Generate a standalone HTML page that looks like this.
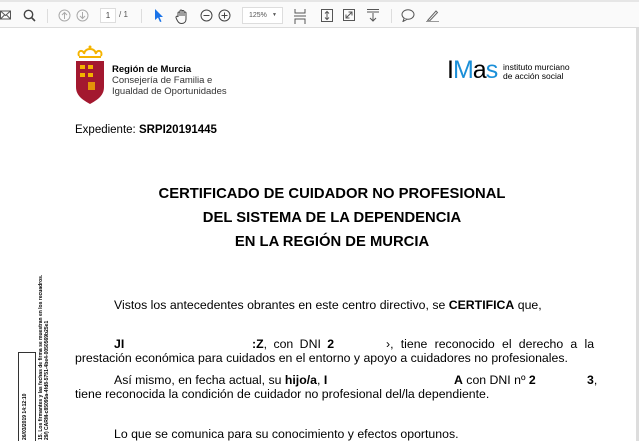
<!DOCTYPE html>
<html><head><meta charset="utf-8"><style>
*{margin:0;padding:0;box-sizing:border-box}
body{width:639px;height:441px;overflow:hidden;background:#fff;font-family:"Liberation Sans",sans-serif;position:relative;color:#000}
.tb{position:absolute;left:0;top:0;width:639px;height:28px;background:#fafafa;border-top:2px solid #e6e6e6;border-bottom:1px solid #dcdcdc}
.a{position:absolute;white-space:nowrap}
.ic{position:absolute;top:7px}
.sep{position:absolute;top:7px;width:1px;height:14px;background:#ddd}
.t{font-size:12.3px}
</style></head><body>
<div class="tb">
<svg class="ic" style="left:0" width="12" height="12" viewBox="0 0 12 12"><rect x="0.5" y="2" width="10" height="8" fill="none" stroke="#555"/><path d="M0.5 2L5.5 6.5 10.5 2M0.5 10l4-4M10.5 10l-4-4" fill="none" stroke="#555"/></svg>
<svg class="ic" style="left:23px" width="13" height="13" viewBox="0 0 13 13"><circle cx="5.5" cy="5.5" r="4.2" fill="none" stroke="#444" stroke-width="1.4"/><path d="M8.5 8.5L12 12" stroke="#444" stroke-width="1.6"/></svg>
<div class="sep" style="left:47px"></div>
<svg class="ic" style="left:58px" width="13" height="13" viewBox="0 0 13 13"><circle cx="6.5" cy="6.5" r="5.5" fill="none" stroke="#aaa"/><path d="M6.5 10V3.5M4 6l2.5-2.5L9 6" fill="none" stroke="#aaa"/></svg>
<svg class="ic" style="left:76px" width="13" height="13" viewBox="0 0 13 13"><circle cx="6.5" cy="6.5" r="5.5" fill="none" stroke="#aaa"/><path d="M6.5 3v6.5M4 7l2.5 2.5L9 7" fill="none" stroke="#aaa"/></svg>
<div class="a" style="left:100px;top:6px;width:16px;height:15px;border:1px solid #ddd;background:#fff;font-size:8px;text-align:center;line-height:13px;color:#444">1</div>
<div class="a" style="left:119px;top:8px;font-size:8px;color:#555">/ 1</div>
<div class="sep" style="left:141px"></div>
<svg class="ic" style="left:154px" width="10" height="14" viewBox="0 0 10 14"><path d="M1 0L9 8H5.5L7.5 12.5 6 13 4 8.5 1 11Z" fill="#1a73e8"/></svg>
<svg class="ic" style="left:175px" width="14" height="15" viewBox="0 0 14 15"><path d="M3 8V4a1 1 0 012 0V7V2a1 1 0 012 0v5V2.5a1 1 0 012 0V7V4a1 1 0 012 0v6c0 3-2 4.5-4.5 4.5S3 13 1.5 10L1 8.5a1 1 0 012-.5" fill="none" stroke="#444"/></svg>
<svg class="ic" style="left:200px" width="13" height="13" viewBox="0 0 13 13"><circle cx="6.5" cy="6.5" r="5.5" fill="none" stroke="#444"/><path d="M3.5 6.5h6" stroke="#444"/></svg>
<svg class="ic" style="left:218px" width="13" height="13" viewBox="0 0 13 13"><circle cx="6.5" cy="6.5" r="5.5" fill="none" stroke="#444"/><path d="M3.5 6.5h6M6.5 3.5v6" stroke="#444"/></svg>
<div class="a" style="left:242px;top:5px;width:41px;height:17px;border:1px solid #ddd;background:#fff;font-size:7px;line-height:15px;padding-left:6px;color:#555">125%<span style="position:absolute;right:5px;font-size:5px">▼</span></div>
<svg class="ic" style="left:294px" width="12" height="15" viewBox="0 0 12 15"><path d="M1 0v4h10V0M1 15v-5h10v5M0 7h12" fill="none" stroke="#555"/></svg>
<svg class="ic" style="left:321px" width="12" height="13" viewBox="0 0 12 13"><rect x=".5" y=".5" width="11" height="12" fill="none" stroke="#555"/><path d="M6 2.5v8M4 4.5l2-2 2 2M4 8.5l2 2 2-2" fill="none" stroke="#555"/></svg>
<svg class="ic" style="left:343px" width="12" height="12" viewBox="0 0 12 12"><rect x=".5" y=".5" width="11" height="11" fill="none" stroke="#555"/><path d="M3 9l6-6M5.5 3H9v3.5M3 5.5V9h3.5" fill="none" stroke="#555"/></svg>
<svg class="ic" style="left:366px" width="14" height="13" viewBox="0 0 14 13"><path d="M1 .5h12M1 3h12" stroke="#555"/><path d="M7 4v8M4 9l3 3 3-3" fill="none" stroke="#555"/></svg>
<div class="sep" style="left:391px"></div>
<svg class="ic" style="left:401px" width="14" height="13" viewBox="0 0 14 13"><ellipse cx="7" cy="5.5" rx="6" ry="4.8" fill="none" stroke="#555"/><path d="M3 9.5L2 12.5 6 10.3" fill="#fff" stroke="#555"/></svg>
<svg class="ic" style="left:426px" width="13" height="13" viewBox="0 0 13 13"><path d="M2 11L10 2l1.5 1.5L3.5 12H1.5Z" fill="none" stroke="#666"/><path d="M0 12.5h13" stroke="#999"/></svg>
</div>
<div class="a" style="left:636px;top:28px;width:3px;height:413px;background:#ddd"></div>
<svg class="a" style="left:75px;top:44px" width="30" height="61" viewBox="0 0 30 61">
<path d="M4 12c-2-5 3-7 5-3M26 12c2-5-3-7-5-3M9 10c1-5 5-5 6-5s5 0 6 5M4 13h22" fill="none" stroke="#f5b400" stroke-width="2"/>
<circle cx="15" cy="3" r="1.5" fill="#f5b400"/>
<path d="M1 17h28v26c0 9-7 13-14 17C8 56 1 52 1 43Z" fill="#a3182f"/>
<rect x="5" y="21" width="5" height="4" fill="#f2b200"/><rect x="13" y="21" width="5" height="4" fill="#f2b200"/><rect x="5" y="29" width="5" height="4" fill="#f2b200"/><rect x="13" y="29" width="5" height="4" fill="#f2b200"/>
<rect x="13" y="38" width="7" height="8" fill="#f2b200" opacity=".8"/>
</svg>
<div class="a" style="left:112px;top:64px;font-size:9.5px;line-height:11px"><b>Región de Murcia</b><br><span style="color:#333">Consejería de Familia e<br>Igualdad de Oportunidades</span></div>
<div class="a" style="left:447px;top:58px;font-size:25px;letter-spacing:-1px;line-height:24px">I<span style="color:#1a8fd8">M</span>a<span style="color:#1a8fd8">s</span></div>
<div class="a" style="left:503px;top:63px;font-size:8.5px;line-height:9px">instituto murciano<br>de acción social</div>
<div class="a" style="left:75px;top:124px;font-size:11.5px">Expediente: <b>SRPI20191445</b></div>
<div class="a" style="left:78px;top:182px;width:508px;text-align:center;font-weight:bold;font-size:14.8px;line-height:24px">CERTIFICADO DE CUIDADOR NO PROFESIONAL<br>DEL SISTEMA DE LA DEPENDENCIA<br>EN LA REGIÓN DE MURCIA</div>
<div class="a t" style="left:114px;top:298px">Vistos los antecedentes obrantes en este centro directivo, se <b>CERTIFICA</b> que,</div>
<div class="a t" style="left:114px;top:337px"><b>JI</b></div>
<div class="a t" style="left:252px;top:337px;word-spacing:3px"><b>:Z</b>, con DNI <b>2</b></div>
<div class="a t" style="left:386px;top:337px;word-spacing:3.8px">›, tiene reconocido el derecho a la</div>
<div class="a t" style="left:75px;top:351px">prestación económica para cuidados en el entorno y apoyo a cuidadores no profesionales.</div>
<div class="a t" style="left:114px;top:373px">Así mismo, en fecha actual, su <b>hijo/a</b>, <b>I</b></div>
<div class="a t" style="left:454px;top:373px"><b>A</b> con DNI nº <b>2</b></div>
<div class="a t" style="left:587px;top:373px"><b>3</b>,</div>
<div class="a t" style="left:75px;top:387px">tiene reconocida la condición de cuidador no profesional del/la dependiente.</div>
<div class="a t" style="left:114px;top:427px">Lo que se comunica para su conocimiento y efectos oportunos.</div>
<div class="a" style="left:18px;top:352px;width:18px;height:89px;border:1px solid #333;border-bottom:none"></div>
<div class="a" style="left:22px;top:440px;transform:rotate(-90deg);transform-origin:0 0;font-size:5px;line-height:6px;font-weight:bold">26/03/2019 14:12:10</div>
<div class="a" style="left:38px;top:440px;transform:rotate(-90deg);transform-origin:0 0;font-size:5px;line-height:6px;font-weight:bold">15. Los firmantes y las fechas de firma se muestran en los recuadros.<br>29/) CARM-c85095a-4fd8-5751-4be4-0050569b25e1</div>
</body></html>
